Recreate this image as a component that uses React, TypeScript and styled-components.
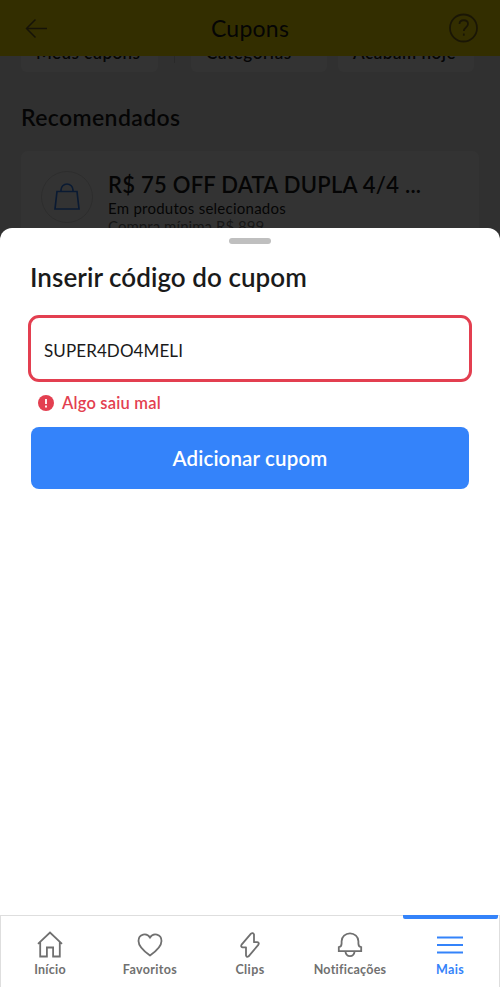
import React from "react";
import styled, { createGlobalStyle } from "styled-components";

const Global = createGlobalStyle`
  * { box-sizing: border-box; }
  body { margin: 0; font-family: Lato, "Open Sans", sans-serif; color: #1a1a1a; background: #fff; }
  svg { display: block; fill: none; flex: none; }
`;

const Screen = styled.div`
  position: relative;
  width: 500px;
  height: 987px;
  display: flex;
  flex-direction: column;
  overflow: hidden;
`;

const Backdrop = styled.div`
  position: relative;
  height: 240px;
  margin-bottom: -12px;
  background: #f0f0f0;
  overflow: hidden;
  flex: none;
`;

const Scrim = styled.div`
  position: absolute;
  inset: 0;
  background: rgba(0, 0, 0, 0.8);
`;

const Header = styled.header`
  height: 56px;
  padding: 0 21px 0 25px;
  display: grid;
  grid-template-columns: 30px 1fr 30px;
  align-items: center;
  background: #ffe600;
`;

const HeaderTitle = styled.h1`
  margin: 0 4px 0 0;
  text-align: center;
  font-size: 23px;
  line-height: 28px;
  font-weight: 400;
  letter-spacing: 0.25px;
`;

const Filters = styled.div`
  height: 16px;
  display: flex;
  align-items: flex-end;
  padding-left: 21px;
  overflow: hidden;
`;

const Filter = styled.div<{ $width: number; $spacing: number }>`
  width: ${(p) => p.$width}px;
  height: 36px;
  margin-right: 11px;
  padding-left: 15px;
  border-radius: 6px;
  background: #fff;
  font-size: 17px;
  line-height: 33px;
  font-weight: 600;
  white-space: nowrap;
  letter-spacing: ${(p) => p.$spacing}px;
`;

const Separator = styled.div`
  width: 1px;
  height: 36px;
  margin: 0 16px 9px 5px;
  background: #ccc;
`;

const SectionTitle = styled.h2`
  margin: 30px 0 0 21px;
  font-size: 23px;
  line-height: 30px;
  font-weight: 600;
  letter-spacing: 0.38px;
`;

const CouponCard = styled.article`
  height: 110px;
  margin: 19px 21px 0;
  padding: 20px;
  display: flex;
  gap: 15px;
  border-radius: 7px;
  background: #fff;
`;

const CouponIcon = styled.div`
  width: 52px;
  height: 52px;
  display: grid;
  place-items: center;
  border: 1px solid #ddd;
  border-radius: 50%;
`;

const CouponBody = styled.div`
  white-space: nowrap;
`;

const CouponTitle = styled.h3`
  margin: 0;
  font-size: 22px;
  line-height: 28px;
  font-weight: 600;
  letter-spacing: 0.25px;
`;

const CouponLine = styled.p<{ $muted?: boolean }>`
  margin: 0;
  font-size: 15px;
  line-height: 18px;
  letter-spacing: ${(p) => (p.$muted ? 0.05 : 0.25)}px;
  color: ${(p) => (p.$muted ? "#737373" : "#1a1a1a")};
`;

const Sheet = styled.section`
  position: relative;
  flex: 1;
  display: flex;
  flex-direction: column;
  padding: 10px 28px 0 28px;
  border-radius: 12px 12px 0 0;
  background: #fff;
`;

const Handle = styled.div`
  width: 42px;
  height: 6px;
  margin: 0 auto;
  border-radius: 3px;
  background: #bfbfbf;
`;

const SheetTitle = styled.h2`
  margin: 16px 0 0 2px;
  font-size: 26px;
  line-height: 34px;
  font-weight: 600;
  letter-spacing: 0.05px;
`;

const CodeField = styled.div`
  height: 67px;
  margin-top: 21px;
  padding: 3px 13px 0;
  display: flex;
  align-items: center;
  border: 3px solid #e33f50;
  border-radius: 11px;
  font-size: 17px;
  letter-spacing: 0.1px;
`;

const ErrorMessage = styled.div`
  height: 45px;
  padding: 0 0 3px 10px;
  display: flex;
  align-items: center;
  gap: 8px;
  color: #e33f50;
  font-size: 16.5px;
  font-weight: 600;
  letter-spacing: 0.2px;
`;

const SubmitButton = styled.button`
  height: 62px;
  margin: 0 3px;
  padding: 0;
  border: 0;
  border-radius: 8px;
  background: #3483fa;
  color: #fff;
  font: 600 20.5px Lato, sans-serif;
  letter-spacing: 0.15px;
`;

const TabBar = styled.nav`
  height: 72px;
  flex: none;
  display: grid;
  grid-template-columns: repeat(5, 1fr);
  box-shadow: inset 1px 1px #dedede, inset -1px 0 #dedede;
`;

const Tab = styled.a<{ $active?: boolean; $spacing: number }>`
  position: relative;
  display: flex;
  flex-direction: column;
  align-items: center;
  padding-top: 15px;
  color: ${(p) => (p.$active ? "#3483fa" : "#707070")};
  font-size: 12.5px;
  line-height: 19px;
  font-weight: 700;
  letter-spacing: ${(p) => p.$spacing}px;

  &::before {
    content: "";
    display: ${(p) => (p.$active ? "block" : "none")};
    position: absolute;
    top: 0;
    left: 3px;
    width: 95px;
    height: 4px;
    border-radius: 0 0 2px 2px;
    background: #3483fa;
  }
`;

const TabIcon = ({ children }: { children: React.ReactNode }) => (
  <svg width="30" height="30" viewBox="0 0 30 30" stroke="currentColor" strokeWidth="1.8">
    {children}
  </svg>
);

const tabs = [
  { label: "Início", spacing: 0.25, icon: <path d="M3 13.8 15 2.500l12 11.300M5.200 12V26.500h6.700v-9h6.200v9h6.700V12" /> },
  {
    label: "Favoritos",
    spacing: 0.35,
    icon: <path d="M15 25.500C10 22 3.500 17 3.500 11 3.500 3.500 12 2.500 15 7.500c3-5 11.500-4 11.500 3.500C26.500 17 20 22 15 25.500Z" />,
  },
  {
    label: "Clips",
    spacing: 0.4,
    icon: (
      <path
        d="M16 3.600 6.600 14.600q-1.200 2.200 1 2.700H11v8.200q.7 2.200 2.600.8l9.700-11.400q1.300-2.200-1-2.700H19V4.400q-1.200-2.200-3-.8Z"
        strokeLinejoin="round"
      />
    ),
  },
  {
    label: "Notificações",
    spacing: 0.25,
    icon: <path d="M3.800 21.200v-4q2.800-.6 2.800-3.800v-2.200a8.400 7.800 0 0 1 16.800 0v2.200q0 3.200 2.800 3.800v4ZM10.300 21.200q.7 5 4.700 5t4.700-5" />,
  },
  { label: "Mais", spacing: 0.3, active: true, icon: <path d="M2 7.500h26M2 15h26M2 22.500h26" /> },
];

export default function App() {
  return (
    <>
      <Global />
      <Screen>
        <Backdrop>
          <Header>
            <svg width="23" height="21" stroke="#705f2b" strokeWidth="1.5">
              <path d="M22 10.500H1.500M10.500 1.500l-9 9 9 9" />
            </svg>
            <HeaderTitle>Cupons</HeaderTitle>
            <svg width="30" height="30" stroke="#806f1c" strokeWidth="1.8">
              <circle cx="14.500" cy="15" r="13.500" />
              <path d="M10.500 11c0-5 8.500-5 8.500 0 0 3.500-4.200 3.500-4.200 7M14.800 20.500v2.200" />
            </svg>
          </Header>
          <Filters>
            <Filter $width={137} $spacing={0.4}>Meus cupons</Filter>
            <Separator />
            <Filter $width={136} $spacing={0.6}>Categorias</Filter>
            <Filter $width={136} $spacing={0.55}>Acabam hoje</Filter>
          </Filters>
          <SectionTitle>Recomendados</SectionTitle>
          <CouponCard>
            <CouponIcon>
              <svg width="28" height="30" stroke="#3483fa" strokeWidth="1.7">
                <path d="M4 9.500h20l2 17.500h-24ZM8 9.500V8a6 6 0 0 1 12 0v1.500" />
              </svg>
            </CouponIcon>
            <CouponBody>
              <CouponTitle>R$ 75 OFF DATA DUPLA 4/4 ...</CouponTitle>
              <CouponLine>Em produtos selecionados</CouponLine>
              <CouponLine $muted>Compra mínima R$ 899</CouponLine>
            </CouponBody>
          </CouponCard>
          <Scrim />
        </Backdrop>
        <Sheet>
          <Handle />
          <SheetTitle>Inserir código do cupom</SheetTitle>
          <CodeField>SUPER4DO4MELI</CodeField>
          <ErrorMessage>
            <svg width="16" height="16">
              <circle cx="8" cy="8" r="8" fill="#e33f50" />
              <path d="M8 4v5M8 10.500v2" stroke="#fff" strokeWidth="1.8" />
            </svg>
            Algo saiu mal
          </ErrorMessage>
          <SubmitButton>Adicionar cupom</SubmitButton>
        </Sheet>
        <TabBar>
          {tabs.map((t) => (
            <Tab key={t.label} $active={t.active} $spacing={t.spacing}>
              <TabIcon>{t.icon}</TabIcon>
              {t.label}
            </Tab>
          ))}
        </TabBar>
      </Screen>
    </>
  );
}
